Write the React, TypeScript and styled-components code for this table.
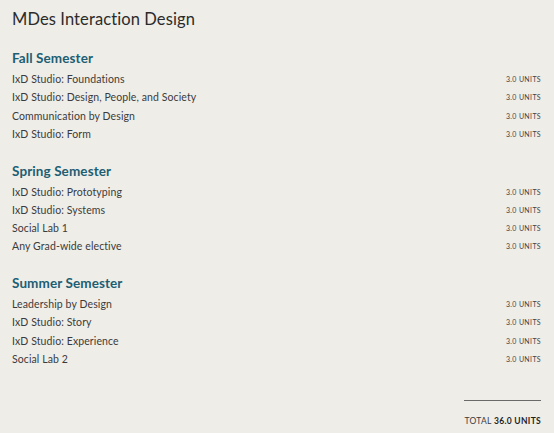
import React from 'react';
import styled, { createGlobalStyle } from 'styled-components';

const GlobalStyle = createGlobalStyle`
  html, body {
    margin: 0;
    padding: 0;
    background: #efede8;
  }
  body {
    font-family: Lato, "Open Sans", sans-serif;
    color: #3b3b3b;
  }
`;

type Course = { name: string; units: string };
type Semester = { title: string; courses: Course[] };

const semesters: Semester[] = [
  {
    title: 'Fall Semester',
    courses: [
      { name: 'IxD Studio: Foundations', units: '3.0' },
      { name: 'IxD Studio: Design, People, and Society', units: '3.0' },
      { name: 'Communication by Design', units: '3.0' },
      { name: 'IxD Studio: Form', units: '3.0' },
    ],
  },
  {
    title: 'Spring Semester',
    courses: [
      { name: 'IxD Studio: Prototyping', units: '3.0' },
      { name: 'IxD Studio: Systems', units: '3.0' },
      { name: 'Social Lab 1', units: '3.0' },
      { name: 'Any Grad-wide elective', units: '3.0' },
    ],
  },
  {
    title: 'Summer Semester',
    courses: [
      { name: 'Leadership by Design', units: '3.0' },
      { name: 'IxD Studio: Story', units: '3.0' },
      { name: 'IxD Studio: Experience', units: '3.0' },
      { name: 'Social Lab 2', units: '3.0' },
    ],
  },
];

const Page = styled.div`
  width: 554px;
  height: 433px;
  box-sizing: border-box;
  padding: 7px 13px 0 12px;
  display: flex;
  flex-direction: column;
`;

const Title = styled.h1`
  margin: 0 0 17px;
  font-size: 16.5px;
  line-height: 24px;
  font-weight: 400;
  color: #2b2b2b;
  letter-spacing: 0.1px;
`;

const Section = styled.section`
  display: flex;
  flex-direction: column;
  & + & {
    margin-top: 17.5px;
  }
`;

const SectionTitle = styled.h2`
  margin: 0 0 2px;
  font-size: 13.5px;
  line-height: 20px;
  font-weight: 700;
  color: #1d5e73;
  letter-spacing: 0.1px;
`;

const Row = styled.div`
  display: flex;
  justify-content: space-between;
  align-items: center;
  height: 18.25px;
`;

const CourseName = styled.span`
  font-size: 10.5px;
  letter-spacing: 0.1px;
  color: #3b3b3b;
`;

const Units = styled.span`
  font-size: 7px;
  letter-spacing: 0.35px;
  color: #444;
`;

const Footer = styled.div`
  margin-top: 32px;
  display: flex;
  flex-direction: column;
  align-items: flex-end;
`;

const Rule = styled.div`
  width: 77px;
  height: 1px;
  background: #6a6a6a;
`;

const Total = styled.div`
  margin-top: 14px;
  font-size: 8.5px;
  line-height: 12px;
  letter-spacing: 0.3px;
  color: #3b3b3b;
  b {
    font-weight: 700;
    color: #1f1f1f;
  }
`;

const App = () => (
  <>
    <GlobalStyle />
    <Page>
      <Title>MDes Interaction Design</Title>
      {semesters.map((s) => (
        <Section key={s.title}>
          <SectionTitle>{s.title}</SectionTitle>
          {s.courses.map((c) => (
            <Row key={c.name}>
              <CourseName>{c.name}</CourseName>
              <Units>{c.units} UNITS</Units>
            </Row>
          ))}
        </Section>
      ))}
      <Footer>
        <Rule />
        <Total>
          TOTAL <b>36.0 UNITS</b>
        </Total>
      </Footer>
    </Page>
  </>
);

export default App;
